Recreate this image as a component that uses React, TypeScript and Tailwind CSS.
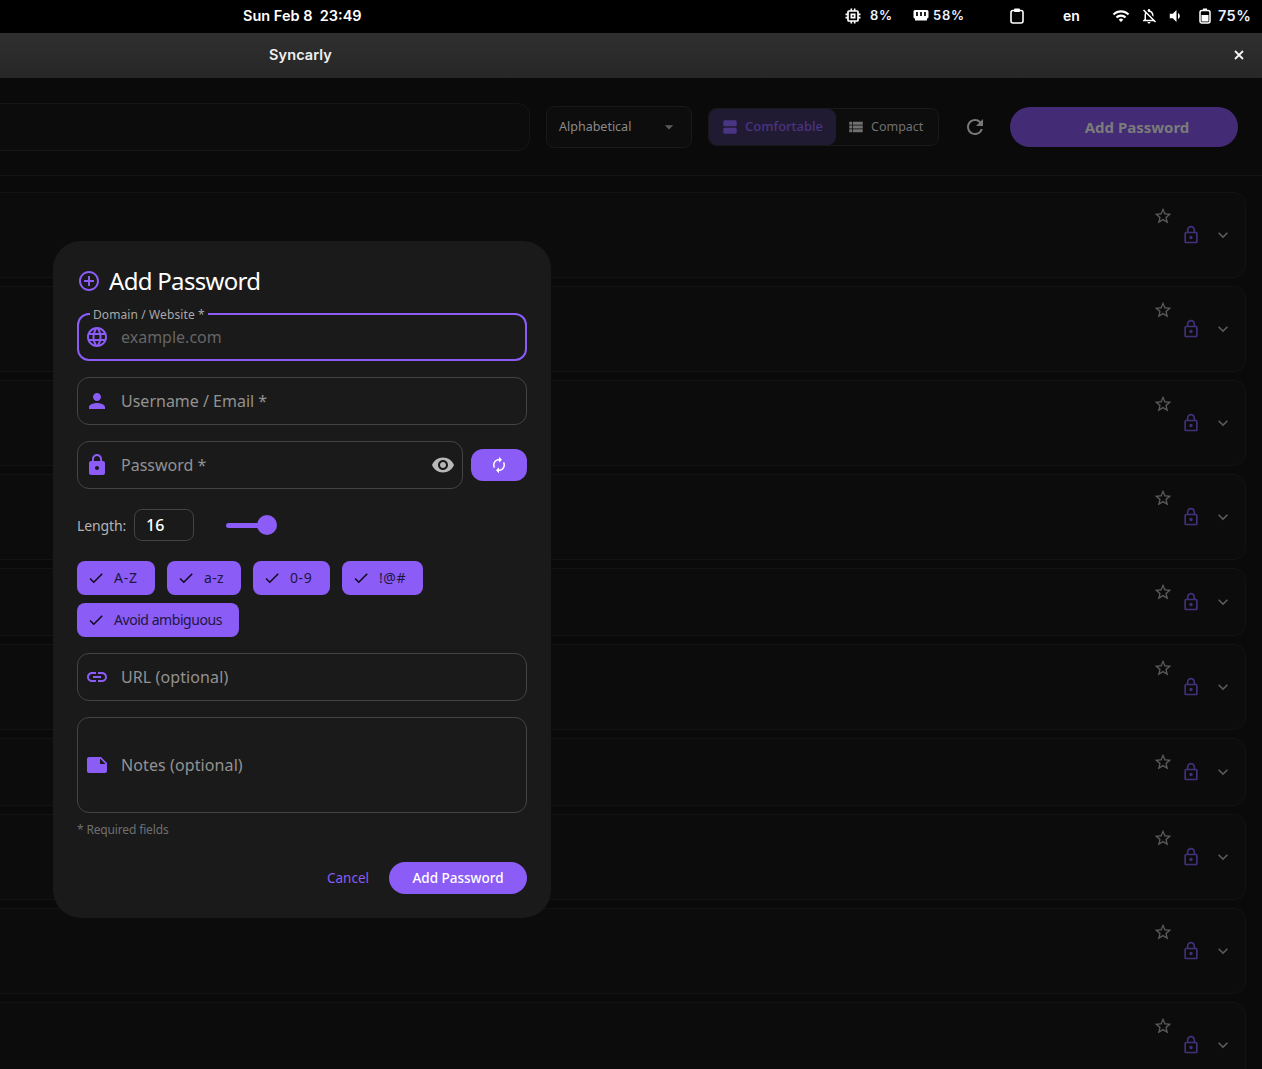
import type { ReactNode } from 'react'
import {
  MdAddCircleOutline,
  MdArrowDropDown,
  MdAutorenew,
  MdCheck,
  MdExpandMore,
  MdLanguage,
  MdLink,
  MdLock,
  MdMemory,
  MdNote,
  MdOutlineLock,
  MdOutlineNotificationsOff,
  MdPerson,
  MdRefresh,
  MdStarBorder,
  MdViewAgenda,
  MdViewList,
  MdVisibility,
  MdVolumeDown,
  MdWifi,
} from 'react-icons/md'

const ROW_HEIGHTS = [86, 86, 86, 86, 68, 86, 68, 86, 86, 86]

function RamIcon() {
  return (
    <svg width="16" height="14" viewBox="0 0 16 14" fill="none">
      <path d="M2 1h12a1.5 1.5 0 0 1 1.5 1.5V8a1.5 1.5 0 0 1-1.5 1.5v2H2v-2A1.500 1.500 0 0 1 .5 8V2.500A1.500 1.500 0 0 1 2 1z" fill="#fff" />
      <rect x="3" y="3" width="2" height="4" fill="#222" />
      <rect x="7" y="3" width="2" height="4" fill="#222" />
      <rect x="11" y="3" width="2" height="4" fill="#222" />
    </svg>
  )
}

function ClipboardIcon() {
  return (
    <svg width="14" height="16" viewBox="0 0 14 16" fill="none">
      <rect x="1" y="2.500" width="12" height="12.500" rx="2" stroke="#fff" strokeWidth="1.600" />
      <rect x="4" y="0.500" width="6" height="3.500" rx="1" fill="#fff" />
    </svg>
  )
}

function BatteryIcon() {
  return (
    <svg width="12" height="16" viewBox="0 0 12 16" fill="none">
      <rect x="1" y="2.500" width="10" height="12.500" rx="2" stroke="#fff" strokeWidth="1.500" />
      <rect x="4" y="0.500" width="4" height="2" fill="#fff" />
      <rect x="2.500" y="7" width="7" height="6.500" fill="#fff" />
    </svg>
  )
}

function CloseIcon() {
  return (
    <svg width="10" height="10" viewBox="0 0 10 10" fill="none">
      <path d="M1 1l8 8M9 1l-8 8" stroke="#f4f4f4" strokeWidth="1.800" />
    </svg>
  )
}

function StatusBar() {
  return (
    <div className="flex h-[33px] shrink-0 items-center bg-black pb-[2px] pl-[243px] text-white font-['Inter',sans-serif]">
      <span className="w-[587px] text-[14.5px] font-semibold whitespace-pre">Sun Feb 8  23:49</span>
      <div className="flex w-[40px] items-center pl-[13px]">
        <MdMemory size={20} className="shrink-0" />
      </div>
      <span className="w-[43px] text-[13px] font-semibold tracking-[0.8px] text-[#eaf2ff]">8%</span>
      <div className="flex w-[20px] justify-start">
        <RamIcon />
      </div>
      <span className="w-[77px] text-[13px] font-semibold tracking-[0.8px] text-[#eaf2ff]">58%</span>
      <ClipboardIcon />
      <span className="ml-[39px] w-[49px] text-[14px] font-semibold">en</span>
      <MdWifi size={18} />
      <div className="ml-[10px] flex">
        <MdOutlineNotificationsOff size={18} />
      </div>
      <div className="ml-[8px] flex">
        <MdVolumeDown size={18} />
      </div>
      <div className="ml-[15px] flex">
        <BatteryIcon />
      </div>
      <span className="ml-[7px] text-[14.5px] font-semibold tracking-[0.4px] text-[#eaf2ff]">75%</span>
    </div>
  )
}

function TitleBar() {
  return (
    <div className="flex h-[45px] shrink-0 items-center justify-between bg-gradient-to-b from-[#2f2f2f] to-[#272727] pr-[18px] pb-[2px] pl-[269px] font-['Inter',sans-serif] text-white">
      <span className="text-[14.5px] font-semibold tracking-[0.1px] text-[#f0f0f0]">Syncarly</span>
      <CloseIcon />
    </div>
  )
}

function Toolbar() {
  return (
    <div className="flex h-[98px] shrink-0 items-center border-b border-[#151515] pr-[24px]">
      <div className="-ml-4 h-[48px] w-[546px] shrink-0 rounded-xl border border-[#161616] bg-[#0c0c0c]" />
      <div className="ml-[16px] flex h-[42px] w-[146px] items-center justify-between rounded-lg border border-[#191919] bg-[#0d0d0d] pt-[1px] pr-[16px] pl-[12px] text-[12.5px] text-[#8a8a8a]">
        <span>Alphabetical</span>
        <MdArrowDropDown size={20} className="-mr-1 text-[#5c5c5c]" />
      </div>
      <div className="ml-[16px] flex h-[38px] w-[231px] items-center rounded-lg border border-[#191919] bg-[#0d0d0d] text-[13px]">
        <div className="flex h-full w-[127px] items-center gap-[6px] rounded-lg bg-[#211a33] pl-[12px] font-medium text-[#4a3484]">
          <MdViewAgenda size={18} />
          <span className="pt-[1px]">Comfortable</span>
        </div>
        <div className="flex h-full items-center gap-[6px] pl-[11px] text-[#707070]">
          <MdViewList size={18} />
          <span className="pt-[2px] text-[12.5px]">Compact</span>
        </div>
      </div>
      <MdRefresh size={24} className="ml-[24px] text-[#787878]" />
      <div className="ml-[23px] flex h-[40px] w-[228px] items-center justify-center rounded-full bg-[#432b75] pt-[2px] pl-[26px] text-[15px] font-bold text-[#7b7b7b]">
        Add Password
      </div>
    </div>
  )
}

function PasswordRow({ height }: { height: number }) {
  return (
    <div
      className="-ml-4 flex w-[1262px] shrink-0 items-center rounded-xl border border-[#131216] bg-[#0c0c0d] pr-[12px]"
      style={{ height }}
    >
      <div className="ml-auto flex h-full items-center">
        <MdStarBorder size={20} className="mt-[13px] self-start text-[#5a5a5a]" />
        <MdOutlineLock size={20} className="ml-[8px] text-[#43307a]" />
        <MdExpandMore size={20} className="ml-[12px] text-[#5a5a5a]" />
      </div>
    </div>
  )
}

function Field({ icon, children, className = 'h-[48px]', focused, label }: {
  icon: ReactNode
  children: ReactNode
  className?: string
  focused?: boolean
  label?: string
}) {
  return (
    <div
      className={`relative flex items-center rounded-[12px] text-[16px] ${
        focused ? 'border-2 border-[#8b5cf6]' : 'border border-[#444444]'
      } ${className}`}
    >
      {label && (
        <span className="absolute -top-[8px] left-[11px] bg-[#1a1a1a] px-[3px] text-[12px] leading-[16px] tracking-[0.1px] text-[#a8a8a8]">
          {label}
        </span>
      )}
      <div className={`flex shrink-0 justify-center text-[#8b5cf6] ${focused ? 'mr-[6px] w-[36px]' : 'mr-[5px] w-[38px]'}`}>{icon}</div>
      {children}
    </div>
  )
}

function Chip({ label, width, tracking }: { label: string; width: string; tracking: string }) {
  return (
    <div className={`flex h-[34px] items-center rounded-lg bg-[#8b5cf6] pl-[10px] text-[14px] text-[#21163f] ${width}`}>
      <MdCheck size={18} className="text-[#0e0a1a]" />
      <span className={`mb-[1px] ml-[9px] ${tracking}`}>{label}</span>
    </div>
  )
}

function AddPasswordDialog() {
  return (
    <div className="absolute top-[241px] left-[53px] flex h-[677px] w-[498px] flex-col rounded-[28px] bg-[#1a1a1a] px-[24px] pt-[23px]">
      <div className="flex h-[34px] items-center">
        <MdAddCircleOutline size={24} className="text-[#8b5cf6]" />
        <h2 className="ml-[8px] text-[24px] leading-[34px] tracking-[-0.7px] text-white">Add Password</h2>
      </div>
      <div className="mt-[15px] flex flex-col gap-[16px]">
        <Field focused label="Domain / Website *" icon={<MdLanguage size={24} />}>
          <span className="text-[#656565]">example.com</span>
        </Field>
        <Field icon={<MdPerson size={24} />}>
          <span className="text-[#929292]">Username / Email *</span>
        </Field>
        <div className="flex items-center gap-[8px]">
          <Field className="h-[48px] flex-1 pr-[7px]" icon={<MdLock size={24} />}>
            <span className="text-[#929292]">Password *</span>
            <MdVisibility size={24} className="ml-auto text-[#b8b8b8]" />
          </Field>
          <div className="flex h-[32px] w-[56px] items-center justify-center rounded-xl bg-[#8b5cf6] text-white">
            <MdAutorenew size={18} />
          </div>
        </div>
      </div>
      <div className="mt-[20px] flex h-[32px] items-center">
        <span className="w-[49px] text-[14px] tracking-[-0.1px] text-[#b4b4b4]">Length:</span>
        <div className="ml-[8px] flex h-[32px] w-[60px] items-center rounded-lg border border-[#444444] pl-[11px] text-[16px] font-medium text-white">16</div>
        <div className="ml-[32px] h-[5px] w-[41px] rounded-full bg-[#8b5cf6]" />
        <div className="-ml-[10px] h-[20px] w-[20px] rounded-full bg-[#8b5cf6]" />
      </div>
      <div className="mt-[20px] flex flex-wrap gap-x-[12px] gap-y-[8px]">
        <Chip label="A-Z" width="w-[78px]" tracking="tracking-[0.8px]" />
        <Chip label="a-z" width="w-[74px]" tracking="tracking-[0.3px]" />
        <Chip label="0-9" width="w-[77px]" tracking="tracking-[0.6px]" />
        <Chip label="!@#" width="w-[81px]" tracking="tracking-[0.6px]" />
        <Chip label="Avoid ambiguous" width="w-[162px]" tracking="tracking-[-0.45px]" />
      </div>
      <div className="mt-[16px] flex flex-col gap-[16px]">
        <Field icon={<MdLink size={24} />}>
          <span className="tracking-[0.1px] text-[#929292]">URL (optional)</span>
        </Field>
        <Field className="h-[96px]" icon={<MdNote size={24} />}>
          <span className="tracking-[0.1px] text-[#929292]">Notes (optional)</span>
        </Field>
      </div>
      <p className="mt-[8px] text-[12px] leading-[18px] tracking-[-0.15px] text-[#6f6f6f]">* Required fields</p>
      <div className="mt-[23px] flex items-center justify-end">
        <span className="mt-[1px] text-[13.5px] text-[#8b5cf6]">Cancel</span>
        <div className="ml-[20px] flex h-[32px] w-[138px] items-center justify-center rounded-full bg-[#8b5cf6] pt-[1px] text-[13.5px] font-medium text-white">
          Add Password
        </div>
      </div>
    </div>
  )
}

export default function App() {
  return (
    <div className="relative flex h-[1069px] w-[1262px] flex-col overflow-hidden bg-[#0a0a0a] font-['Noto_Sans',sans-serif]">
      <StatusBar />
      <TitleBar />
      <Toolbar />
      <div className="flex flex-col gap-[8px] pt-[16px]">
        {ROW_HEIGHTS.map((h, i) => (
          <PasswordRow key={i} height={h} />
        ))}
      </div>
      <AddPasswordDialog />
    </div>
  )
}
